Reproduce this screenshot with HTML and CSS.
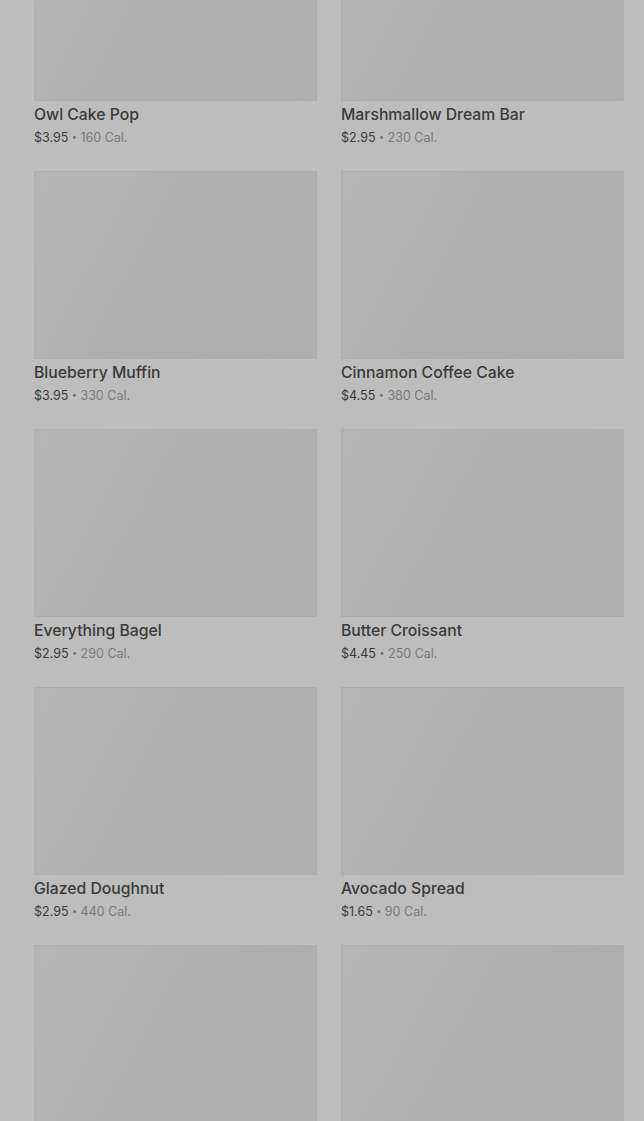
FILE: index.html
```html
<!DOCTYPE html>
<html lang="en">
<head>
<meta charset="utf-8">
<title>Bakery</title>
<link rel="stylesheet" href="styles.css">
</head>
<body>
<main class="grid">
  <article class="card"><div class="thumb"></div><h3 class="name">Owl Cake Pop</h3><p class="meta"><span class="price">$3.95</span> <span class="dot">•</span> <span class="cal">160 Cal.</span></p></article>
  <article class="card"><div class="thumb"></div><h3 class="name">Marshmallow Dream Bar</h3><p class="meta"><span class="price">$2.95</span> <span class="dot">•</span> <span class="cal">230 Cal.</span></p></article>
  <article class="card"><div class="thumb"></div><h3 class="name">Blueberry Muffin</h3><p class="meta"><span class="price">$3.95</span> <span class="dot">•</span> <span class="cal">330 Cal.</span></p></article>
  <article class="card"><div class="thumb"></div><h3 class="name">Cinnamon Coffee Cake</h3><p class="meta"><span class="price">$4.55</span> <span class="dot">•</span> <span class="cal">380 Cal.</span></p></article>
  <article class="card"><div class="thumb"></div><h3 class="name">Everything Bagel</h3><p class="meta"><span class="price">$2.95</span> <span class="dot">•</span> <span class="cal">290 Cal.</span></p></article>
  <article class="card"><div class="thumb"></div><h3 class="name">Butter Croissant</h3><p class="meta"><span class="price">$4.45</span> <span class="dot">•</span> <span class="cal">250 Cal.</span></p></article>
  <article class="card"><div class="thumb"></div><h3 class="name">Glazed Doughnut</h3><p class="meta"><span class="price">$2.95</span> <span class="dot">•</span> <span class="cal">440 Cal.</span></p></article>
  <article class="card"><div class="thumb"></div><h3 class="name">Avocado Spread</h3><p class="meta"><span class="price">$1.65</span> <span class="dot">•</span> <span class="cal">90 Cal.</span></p></article>
  <article class="card"><div class="thumb thumb-last"></div></article>
  <article class="card"><div class="thumb thumb-last"></div></article>
</main>
</body>
</html>
```

FILE: styles.css
```css
html, body {
  margin: 0;
  padding: 0;
  background: #bdbdbd;
  overflow: hidden;
}

body {
  font-family: Inter, Roboto, "Liberation Sans", sans-serif;
  color: #3b3b3b;
}

.grid {
  display: grid;
  grid-template-columns: 1fr 1fr;
  column-gap: 24px;
  row-gap: 22px;
  padding: 0 20px 0 34px;
  margin-top: -87px;
}

.card {
  display: flex;
  flex-direction: column;
  height: 236px;
}

.thumb {
  height: 188px;
  flex: none;
  box-sizing: border-box;
  border: 1px solid #adadad;
  background: linear-gradient(118deg, #b5b5b5 0%, #b4b4b4 26%, #b0b0b0 33%, #afafaf 100%);
}

.thumb-last {
  height: 240px;
}

.name {
  margin: 3px 0 0;
  font-size: 15.75px;
  line-height: 22px;
  font-weight: 500;
  color: #3a3a3a;
  white-space: nowrap;
}

.meta {
  margin: 1px 0 0;
  font-size: 12.5px;
  line-height: 22px;
  white-space: nowrap;
}

.price {
  color: #3a3a3a;
}

.dot {
  color: #6f6f6f;
  font-size: 9px;
  line-height: 0;
  vertical-align: 0.25em;
}

.cal {
  color: #7a7a7a;
}
```
